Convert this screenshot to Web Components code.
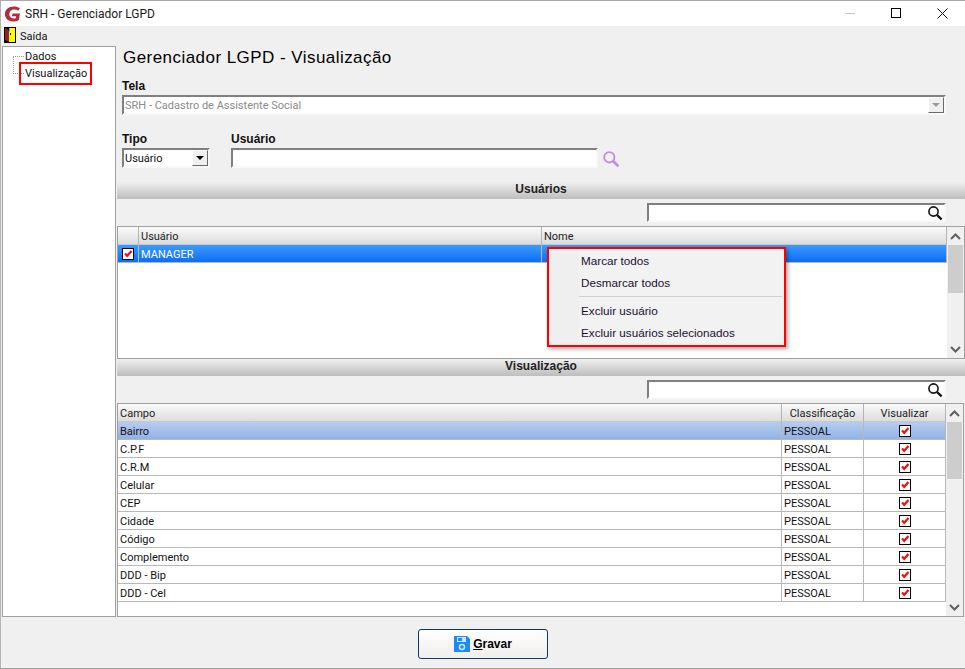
<!DOCTYPE html>
<html lang="pt">
<head>
<meta charset="utf-8">
<title>SRH - Gerenciador LGPD</title>
<style>
  html, body { margin: 0; height: 100%; overflow: hidden; background: #f0f0f0; }
  body { font: 11px Roboto, "Liberation Sans", Arial, sans-serif; color: #000; }
</style>
</head>
<body>

<app-window>
  <title-bar slot="top">SRH - Gerenciador LGPD</title-bar>
  <menu-bar slot="top">Saída</menu-bar>
  <tree-panel slot="side">
    <tree-item>Dados</tree-item>
    <tree-item marked>Visualização</tree-item>
  </tree-panel>

  <page-heading>Gerenciador LGPD - Visualização</page-heading>

  <field-box label="Tela" style="margin:3px 0 0 5px">
    <combo-box value="SRH - Cadastro de Assistente Social" disabled style="width:824px"></combo-box>
  </field-box>

  <filter-row>
    <field-box label="Tipo"><combo-box value="Usuário" style="width:88px"></combo-box></field-box>
    <field-box label="Usuário"><search-box width="367" plain></search-box></field-box>
    <lookup-icon></lookup-icon>
  </filter-row>

  <section-band style="margin-top:14px">Usuários</section-band>
  <search-box width="299" style="margin:4px 0 0 530px"></search-box>

  <data-grid id="users" columns="21px 403px 1fr" height="133" width="848" thumb="48" style="margin-top:4px">
    <grid-head><span></span><span>Usuário</span><span>Nome</span></grid-head>
    <grid-row selected><check-mark></check-mark><span class="t">MANAGER</span><span></span></grid-row>
    <context-menu slot="over">
      <menu-item>Marcar todos</menu-item>
      <menu-item>Desmarcar todos</menu-item>
      <menu-sep></menu-sep>
      <menu-item>Excluir usuário</menu-item>
      <menu-item>Excluir usuários selecionados</menu-item>
    </context-menu>
  </data-grid>

  <section-band>Visualização</section-band>
  <search-box width="299" style="margin:4px 0 0 530px"></search-box>

  <data-grid id="fields" columns="664px 82px 82px" height="214" width="847" thumb="57" style="margin-top:4px">
    <grid-head><span>Campo</span><span class="c">Classificação</span><span class="c">Visualizar</span></grid-head>
  </data-grid>

  <form-footer slot="foot"><save-button>Gravar</save-button></form-footer>
</app-window>

<script>
// small helper so each component reads the same
function define(tag, css, html, setup) {
  customElements.define(tag, class extends HTMLElement {
    constructor() {
      super();
      const shadow = this.attachShadow({ mode: "open" });
      shadow.innerHTML = `<style>${css}</style>${html}`;
    }
    connectedCallback() {
      if (setup) setup.call(this, this.shadowRoot);
    }
  });
}

const lens = `<svg width="16" height="16" viewBox="0 0 16 16" fill="none" stroke="currentColor">
  <circle cx="6.5" cy="6.5" r="4.6" stroke-width="1.6"/><path d="M10 10l4.6 4.4" stroke-width="2.4"/></svg>`;

const sunken = `border:2px solid; border-color:#7f7f7f #f8f8f8 #f8f8f8 #7f7f7f; box-sizing:border-box; background:#fff;`;
const boldFont = `font:bold 12px "Liberation Sans", Arial, sans-serif;`;

define("app-window", `
  :host { display:flex; flex-direction:column; width:965px; height:669px; box-sizing:border-box;
          border-top:1px solid #a9a9a9; border-bottom:1px solid #a0a0a0; border-left:1px solid #b4b4b4; background:#f0f0f0; }
  .body { display:flex; height:571px; padding-left:1px; }
  .main { display:flex; flex-direction:column; width:848px; margin-left:1px; }
`, `
  <slot name="top"></slot>
  <div class="body"><slot name="side"></slot><div class="main"><slot></slot></div></div>
  <slot name="foot"></slot>
`);

define("title-bar", `
  :host { display:flex; align-items:center; height:25px; background:#fff; font:12px Roboto, sans-serif; }
  svg.logo { margin:0 4px 0 3px; }
  .t { flex:1; color:#1a1a1a; }
  .b { width:46px; height:25px; display:flex; align-items:center; justify-content:center; }
  .b svg { display:block; }
`, `
  <svg class="logo" width="17" height="16" viewBox="0 0 15 16" preserveAspectRatio="none">
    <path d="M14 2.200C12.600 1 10.600.4 8.600.4 4 .4.8 3.600.8 8.100c0 4.400 3 7.500 7.200 7.500 1.800 0 3.700-.6 5.100-1.600l1-6.500H7.500L7 10.200h3.700l-.3 2c-.6.3-1.200.4-1.900.4-2.300 0-3.800-1.800-3.800-4.300 0-2.900 1.900-4.900 4.400-4.900 1.400 0 2.500.4 3.500 1.300z" fill="#b52a3c"/>
  </svg>
  <span class="t"><slot></slot></span>
  <span class="b"><svg width="11" height="11"><path d="M0 5.500h10" stroke="#c4c4c4"/></svg></span>
  <span class="b"><svg width="11" height="11" fill="none"><rect x=".5" y=".5" width="9" height="9" stroke="#000"/></svg></span>
  <span class="b"><svg width="11" height="11" fill="none" stroke="#111"><path d="M.5.500l10 10M10.500.500l-10 10"/></svg></span>
`);

define("menu-bar", `
  :host { display:flex; align-items:center; gap:4px; height:20px; padding-left:3px; color:#111; }
  svg { margin-bottom:2px; }
`, `
  <svg width="12" height="16" viewBox="0 0 12 16">
    <rect width="12" height="16" fill="#000"/>
    <rect x="5" y="1" width="6" height="14" fill="#ff0"/>
    <path d="M1 1l4 2v12l-4-2z" fill="#9a2015"/>
    <path d="M5.500 1.500v3" stroke="#2ab4e8"/>
    <path d="M6 6h1v2H6z" fill="#000"/>
  </svg>
  <slot></slot>
`);

define("tree-panel", `
  :host { display:block; width:114px; height:571px; box-sizing:border-box; background:#fff;
          border:1px solid #a0a0a0; padding:1px 0 0 16px; position:relative; }
  .line { position:absolute; left:10px; top:9px; height:18px; width:5px; border-left:1px dotted #999; }
`, `<div class="line"></div><slot></slot>`);

define("tree-item", `
  :host { display:block; height:17px; line-height:17px; color:#111; position:relative; padding-left:6px; }
  :host::before { content:""; position:absolute; left:-6px; top:8px; width:11px; border-top:1px dotted #999; }
  :host([marked])::after { content:""; position:absolute; left:0; top:-3px; width:73px; height:23px;
                           box-sizing:border-box; border:2px solid #f00; }
`, `<slot></slot>`);

define("page-heading", `
  :host { display:block; height:29px; margin-top:1px; padding-left:6px; font:17px/21px "Liberation Sans", sans-serif;
          letter-spacing:.45px; color:#000; }
`, `<slot></slot>`);

define("field-box", `
  :host { display:block; }
  .l { display:block; height:14px; line-height:14px; margin-bottom:2px; ${boldFont} color:#111; }
`, `<span class="l"></span><slot></slot>`, function (root) {
  root.querySelector(".l").textContent = this.getAttribute("label");
});

define("combo-box", `
  :host { display:flex; align-items:center; height:20px; ${sunken} color:#111; }
  :host([disabled]) { color:#8a8a8a; }
  .v { flex:1; padding:1px 0 0 1px; white-space:nowrap; overflow:hidden; }
  .b { width:16px; height:16px; box-sizing:border-box; background:#f0f0f0; display:flex; align-items:center; justify-content:center;
       border:1px solid; border-color:#fff #696969 #696969 #fff; }
  .b i { width:0; height:0; border:4px solid transparent; border-top:4px solid #000; border-bottom:0; }
  :host([disabled]) .b i { border-top-color:#999; }
`, `<span class="v"></span><span class="b"><i></i></span>`, function (root) {
  root.querySelector(".v").textContent = this.getAttribute("value");
});

define("filter-row", `
  :host { display:grid; grid-template-columns:88px 367px auto; column-gap:21px; margin:17px 0 0 5px; align-items:end; }
  ::slotted(lookup-icon) { margin:0 0 0 -17px; }
`, `<slot></slot>`);

define("lookup-icon", `
  :host { display:block; height:18px; color:#c58ae8; }
`, lens.replace('width="16" height="16"', 'width="18" height="18"'));

define("search-box", `
  :host { display:flex; align-items:center; justify-content:flex-end; height:19px; ${sunken} color:#111; padding-right:1px; }
  :host([plain]) { height:20px; }
  :host([plain]) svg { display:none; }
`, lens, function () {
  this.style.width = this.getAttribute("width") + "px";
});

define("section-band", `
  :host { display:block; height:17px; line-height:18px; text-align:center; ${boldFont} color:#222;
          background:linear-gradient(#f0f0f0, #bdbdbd); }
`, `<slot></slot>`);

define("data-grid", `
  :host { display:block; box-sizing:border-box; border:1px solid #a0a0a0; background:#fff; position:relative; }
  .wrap { display:flex; height:100%; }
  .rows { flex:1; min-width:0; overflow:hidden; }
  .bar { width:17px; flex:none; background:#f0f0f0; display:flex; flex-direction:column; }
  .end { height:18px; flex:none; display:flex; align-items:center; justify-content:center; }
  .thumb { background:#cdcdcd; margin:0 1px; }
  .track { flex:1; }
`, `
  <div class="wrap">
    <div class="rows"><slot></slot></div>
    <div class="bar">
      <div class="end"><svg width="11" height="9" fill="none" stroke="#606060" stroke-width="2"><path d="M1 7l4.500-4.500L10 7"/></svg></div>
      <div class="thumb"></div>
      <div class="track"></div>
      <div class="end"><svg width="11" height="9" fill="none" stroke="#606060" stroke-width="2"><path d="M1 2l4.500 4.500L10 2"/></svg></div>
    </div>
  </div>
  <slot name="over"></slot>
`, function (root) {
  this.style.height = this.getAttribute("height") + "px";
  this.style.width = this.getAttribute("width") + "px";
  this.style.setProperty("--cols", this.getAttribute("columns"));
  root.querySelector(".thumb").style.height = this.getAttribute("thumb") + "px";
});

define("grid-head", `
  :host { display:grid; grid-template-columns:var(--cols); height:18px; color:#222; }
  ::slotted(span) { box-sizing:border-box; height:18px; line-height:19px; padding-left:2px; white-space:nowrap;
                    background:linear-gradient(#fafafa, #dcdcdc); border-right:1px solid #b4b4b4; border-bottom:1px solid #c8c8c8; }
  ::slotted(.c) { text-align:center; padding-left:0; }
`, `<slot></slot>`);

define("grid-row", `
  :host { display:grid; grid-template-columns:var(--cols); height:18px; color:#111; }
  ::slotted(*) { box-sizing:border-box; height:18px; line-height:19px; padding-left:2px; white-space:nowrap;
                 border-right:1px solid #b8b8b8; border-bottom:1px solid #b8b8b8; }
  :host([selected]) { color:#fff; background:linear-gradient(#3d9bff, #0a6cf0); }
  :host([soft]) { background:linear-gradient(#b7cdf0, #8fb0e6); color:#111; }
  ::slotted(check-mark) { padding-left:0; }
`, `<slot></slot>`);

define("check-mark", `
  :host { display:flex; align-items:center; justify-content:center; }
`, `<svg width="12" height="12" viewBox="0 0 12 12">
  <rect x=".5" y=".5" width="11" height="11" fill="#fff" stroke="#000"/>
  <path d="M3 5.500l2.200 2.300L9.500 3" fill="none" stroke="#f01010" stroke-width="2.200"/></svg>`);

define("context-menu", `
  :host { position:absolute; left:429px; top:20px; width:239px; height:100px; box-sizing:border-box;
          border:2px solid #f00; background:linear-gradient(90deg, #efefef 30px, #f2f2f2 30px);
          box-shadow:2px 2px 4px rgba(0,0,0,.35); padding-top:1px; }
`, `<slot></slot>`);

define("menu-item", `
  :host { display:block; height:22px; padding-left:32px; color:#1b1030; white-space:nowrap;
          font:11.7px/22px "Liberation Sans", sans-serif; }
`, `<slot></slot>`);

define("menu-sep", `
  :host { display:block; height:1px; margin:2px 2px 3px 30px; background:#d0d0d0; }
`, ``);

define("form-footer", `
  :host { display:flex; justify-content:center; padding-top:12px; box-sizing:border-box; height:51px; }
`, `<slot></slot>`);

define("save-button", `
  :host { display:flex; align-items:center; justify-content:center; gap:3px; width:130px; height:30px; box-sizing:border-box;
          border:1px solid #0b3a70; border-radius:3px; background:linear-gradient(#fff, #f1eeec); ${boldFont} }
  u { text-decoration:underline; }
`, `<svg width="16" height="16" viewBox="0 0 16 16">
    <path d="M0 0h13l3 3v13H0z" fill="#1a8cf0"/>
    <rect x="3" y="1" width="9" height="5" fill="#cfe4f8"/>
    <rect x="4" y="2" width="4" height="3" fill="#1a8cf0"/>
    <circle cx="8" cy="11" r="2.500" fill="none" stroke="#cfe4f8" stroke-width="1.500"/>
  </svg><span><u>G</u>ravar</span>`);

// lower grid rows
const fieldNames = ["Bairro", "C.P.F", "C.R.M", "Celular", "CEP", "Cidade", "Código", "Complemento", "DDD - Bip", "DDD - Cel"];
const fieldsGrid = document.getElementById("fields");
fieldNames.forEach((name, i) => {
  const row = document.createElement("grid-row");
  if (i === 0) row.setAttribute("soft", "");
  row.innerHTML = `<span></span><span>PESSOAL</span><check-mark></check-mark>`;
  row.firstElementChild.textContent = name;
  fieldsGrid.appendChild(row);
});
</script>
</body>
</html>
